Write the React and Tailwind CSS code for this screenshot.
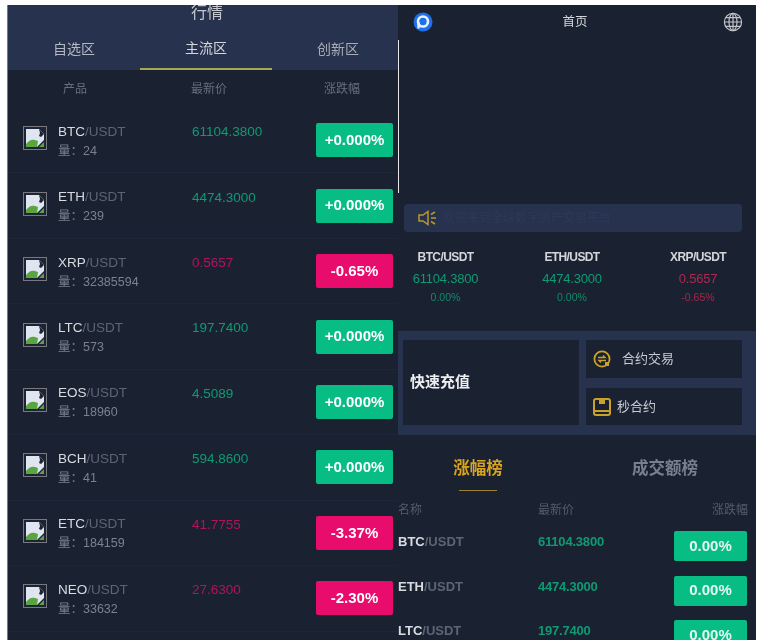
import React from 'react';

const FONT = { fontFamily: '"Liberation Sans", "Noto Sans CJK SC", sans-serif' };

const marketRows = [
  { base: 'BTC', vol: '24', price: '61104.3800', change: '+0.000%', up: true },
  { base: 'ETH', vol: '239', price: '4474.3000', change: '+0.000%', up: true },
  { base: 'XRP', vol: '32385594', price: '0.5657', change: '-0.65%', up: false },
  { base: 'LTC', vol: '573', price: '197.7400', change: '+0.000%', up: true },
  { base: 'EOS', vol: '18960', price: '4.5089', change: '+0.000%', up: true },
  { base: 'BCH', vol: '41', price: '594.8600', change: '+0.000%', up: true },
  { base: 'ETC', vol: '184159', price: '41.7755', change: '-3.37%', up: false },
  { base: 'NEO', vol: '33632', price: '27.6300', change: '-2.30%', up: false },
];

const tickers = [
  { pair: 'BTC/USDT', price: '61104.3800', pct: '0.00%', up: true },
  { pair: 'ETH/USDT', price: '4474.3000', pct: '0.00%', up: true },
  { pair: 'XRP/USDT', price: '0.5657', pct: '-0.65%', up: false },
];

const rankRows = [
  { base: 'BTC', price: '61104.3800' },
  { base: 'ETH', price: '4474.3000' },
  { base: 'LTC', price: '197.7400' },
];

// broken image placeholder
const BrokenImage = () => (
  <svg width="24" height="24" viewBox="0 0 24 24" className="shrink-0 -mt-[4px]">
    <rect x="0.5" y="0.5" width="23" height="23" fill="#1c2435" stroke="#77797f" />
    <path d="M3 3h13l5 5v6l-3 3-4 4H3z" fill="#dfe6f0" />
    <path d="M3 21v-3c3-4 6-5 9-4l3 1-1 6z" fill="#5aa53f" />
    <path d="M16 3l5 5-3 3-2-1 1-3z" fill="#1c2435" />
    <path d="M21 16v5h-5z" fill="#5aa53f" />
  </svg>
);

const MarketRow = ({ row }) => (
  <div className="h-[65.45px] flex items-center border-b border-[#1e2739] pl-[15px]">
    <BrokenImage />
    <div className="w-[134px] shrink-0 ml-[11px] mt-[3px]">
      <div className="text-[13.5px] leading-[18px]">
        <span className="text-[#d8dbe0]">{row.base}</span>
        <span className="text-[#5d6573]">/USDT</span>
      </div>
      <div className="text-[12.5px] leading-[20px] text-[#7b818c]">量：{row.vol}</div>
    </div>
    <div className={`w-[124px] shrink-0 -mt-[16px] text-[13.5px] ${row.up ? 'text-[#0f9a72]' : 'text-[#b5125c]'}`}>
      {row.price}
    </div>
    <div
      className={`w-[77px] h-[34px] shrink-0 rounded-[2px] flex items-center justify-center text-white font-bold text-[15px] ${
        row.up ? 'bg-[#07bd83]' : 'bg-[#e80c6c]'
      }`}
    >
      {row.change}
    </div>
  </div>
);

const MarketPanel = () => (
  <div className="relative w-[391px] shrink-0 border-l border-[#77797f] bg-[#1a2232]">
    <div className="h-[65px] bg-[#27324f] relative overflow-hidden">
      <div className="text-center text-[#c3c6cc] text-[16px] leading-[16px] pl-[8px]">行情</div>
      <div className="absolute left-0 top-[23px] flex h-[42px] text-[14px]">
        <div className="w-[132px] shrink-0 flex items-center justify-center text-[#b4b8c0]">自选区</div>
        <div className="w-[132px] shrink-0 flex items-center justify-center text-[#d6d8dc] border-b-2 border-[#a8a64e]">主流区</div>
        <div className="w-[132px] shrink-0 flex items-center justify-center text-[#a7abb4]">创新区</div>
      </div>
    </div>
    <div className="h-[37px] flex items-center text-[12px] text-[#686e7b]">
      <div className="w-[134px] shrink-0 text-center">产品</div>
      <div className="w-[134px] shrink-0 text-center">最新价</div>
      <div className="w-[122px] shrink-0 pl-[48px]">涨跌幅</div>
    </div>
    <div className="pt-[1px]">
      {marketRows.map((row) => (
        <MarketRow key={row.base} row={row} />
      ))}
    </div>
    {/* thin white scroll line on the seam */}
    <div className="absolute right-[-1px] top-[35px] w-[1px] h-[153px] bg-[#e8e8ea]" />
  </div>
);

const TopBar = () => (
  <div className="h-[33px] flex items-center justify-between pl-[15px] pr-[13px]">
    <svg width="20" height="20" viewBox="0 0 20 20">
      <circle cx="10" cy="10" r="9.5" fill="#1f6fe8" />
      <circle cx="10" cy="9.5" r="5" fill="none" stroke="#e9f1ff" strokeWidth="2.6" />
      <path d="M5.5 10v6.5" stroke="#e9f1ff" strokeWidth="2.4" />
    </svg>
    <span className="text-[12.5px] text-[#d4d6da] -ml-[6px] mt-[2px]">首页</span>
    <svg width="20" height="20" viewBox="0 0 20 20" fill="none" stroke="#c3c5c9" strokeWidth="1.2">
      <circle cx="10" cy="10" r="8.6" />
      <ellipse cx="10" cy="10" rx="4" ry="8.6" />
      <path d="M10 1.4v17.2M1.4 10h17.2M2.8 5.6h14.4M2.8 14.4h14.4" />
    </svg>
  </div>
);

const Notice = () => (
  <div className="h-[28px] mx-[6px] w-[338px] rounded-[4px] bg-[#27324f] flex items-center pl-[14px]">
    <svg width="20" height="16" viewBox="0 0 20 16" fill="none" stroke="#b8982a" strokeWidth="1.5">
      <path d="M1 5h4l5-3.5v13L5 11H1z" />
      <path d="M13 4.5l4-2.5M13 8h5M13 11.5l4 2.5" />
    </svg>
    <span className="ml-[5px] text-[12px] text-[#2f3956]">欢迎来到全球数字资产交易平台</span>
  </div>
);

const Tickers = () => (
  <div className="flex pt-[16px] h-[99px]">
    {tickers.map((t, i) => (
      <div
        key={t.pair}
        className={`text-center ${i === 0 ? 'w-[95px]' : i === 1 ? 'w-[158px]' : 'w-[94px]'}`}
      >
        <div className="text-[12px] leading-[18px] font-bold text-[#d3d5d9] tracking-[-0.6px]">{t.pair}</div>
        <div className={`text-[13px] leading-[20px] mt-[3px] tracking-[-0.2px] ${t.up ? 'text-[#0f9a72]' : 'text-[#b3264f]'}`}>
          {t.price}
        </div>
        <div className={`text-[10.5px] leading-[16px] ${t.up ? 'text-[#0f8a68]' : 'text-[#a5264b]'}`}>{t.pct}</div>
      </div>
    ))}
  </div>
);

const QuickLinks = () => (
  <div className="h-[104px] bg-[#27324f] flex pt-[9px] pl-[5px]">
    <div className="w-[176px] h-[85px] bg-[#1a2232] flex items-center pl-[7px] text-[15px] font-bold text-[#eceef0]">
      快速充值
    </div>
    <div className="ml-[7px] w-[156px] flex flex-col gap-[10px]">
      <div className="h-[38px] bg-[#1a2232] flex items-center pl-[7px]">
        <svg width="18" height="18" viewBox="0 0 18 18" fill="none" stroke="#c9a227" strokeWidth="1.8">
          <circle cx="9" cy="9" r="7.6" />
          <path d="M5 7.5h7l-2-2M13 10.5H6l2 2" strokeWidth="1.4" />
          <path d="M12 12h4v4h-4z" fill="#c9a227" stroke="none" />
        </svg>
        <span className="ml-[11px] text-[13px] text-[#c8cbd0]">合约交易</span>
      </div>
      <div className="h-[37px] bg-[#1a2232] flex items-center pl-[7px]">
        <svg width="18" height="18" viewBox="0 0 18 18" fill="none" stroke="#c9a227" strokeWidth="2">
          <rect x="1" y="1" width="16" height="16" rx="2" />
          <path d="M6 1h6v5H6z" fill="#c9a227" stroke="none" />
          <path d="M1 13h16" />
        </svg>
        <span className="ml-[6px] text-[13px] text-[#c8cbd0]">秒合约</span>
      </div>
    </div>
  </div>
);

const RankTabs = () => (
  <div className="h-[64px] flex pt-[21px]">
    <div className="w-[160px] text-center">
      <div className="text-[16.5px] leading-[24px] font-bold text-[#d9a520]">涨幅榜</div>
      <div className="mx-auto mt-[10px] w-[38px] h-[1px] bg-[#9c8330]" />
    </div>
    <div className="ml-[62px] w-[90px] text-center text-[16.5px] leading-[24px] font-bold text-[#76808f] whitespace-nowrap">
      成交额榜
    </div>
  </div>
);

const RankList = () => (
  <div className="pr-[8px] pt-[1px]">
    <div className="flex items-center h-[20px] text-[12px] text-[#565c69]">
      <div className="w-[140px]">名称</div>
      <div>最新价</div>
      <div className="ml-auto">涨跌幅</div>
    </div>
    <div className="pt-[2px]">
      {rankRows.map((r) => (
        <div key={r.base} className="h-[44.5px] flex items-start">
          <div className="w-[140px] pt-[10px] text-[13px] leading-[20px] font-bold">
            <span className="text-[#d8dbe0]">{r.base}</span>
            <span className="text-[#5d6573]">/USDT</span>
          </div>
          <div className="pt-[10px] text-[13px] leading-[20px] font-bold tracking-[-0.2px] text-[#0f9a72]">{r.price}</div>
          <div className="ml-auto mr-[1px] mt-[9px] w-[73px] h-[30px] shrink-0 rounded-[2px] bg-[#07bd83] flex items-center justify-center text-[15px] font-bold text-[#e6f7f1]">
            0.00%
          </div>
        </div>
      ))}
    </div>
  </div>
);

const HomePanel = () => (
  <div className="w-[358px] shrink-0 bg-[#1a2232]">
    <TopBar />
    <div className="h-[166px]" />
    <Notice />
    <Tickers />
    <QuickLinks />
    <RankTabs />
    <RankList />
  </div>
);

export default function App() {
  return (
    <div className="h-[640px] w-[767px] overflow-hidden bg-white pt-[5px] pl-[7px]" style={FONT}>
      <div className="flex h-[635px] overflow-hidden blur-[0.4px]">
        <MarketPanel />
        <HomePanel />
      </div>
    </div>
  );
}
